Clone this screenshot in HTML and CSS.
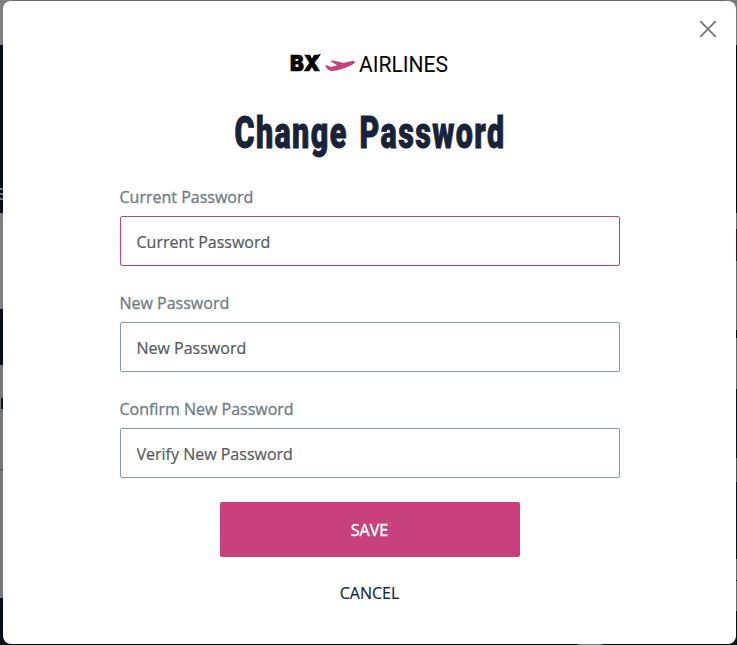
FILE: index.html
```
<!DOCTYPE html>
<html lang="en">
<head>
<meta charset="utf-8">
<title>Change Password</title>
<link rel="stylesheet" href="styles.css">
</head>
<body>
<div class="backdrop" aria-hidden="true">
  <div class="edge edge-left"></div>
  <div class="edge-middle"></div>
  <div class="edge edge-right"></div>
</div>
<main class="modal" role="dialog">
  <button class="close" aria-label="Close">
    <svg width="18" height="18" viewBox="0 0 18 18"><path d="M1.2 1.2 16.8 16.8M16.8 1.2 1.2 16.8" fill="none" stroke="#777" stroke-width="1.8"/></svg>
  </button>
  <svg class="logo" width="162" height="22" viewBox="0 0 162 22">
    <text class="logo-bx" x="1" y="18.3" textLength="30" lengthAdjust="spacingAndGlyphs">BX</text>
    <path d="M26.5 6 29 2.2Q30 1 32 .8L28 7Z"/>
    <path fill="#c8417c" d="M36 12.7 38 12.3 42 14 48.2 12.2 41.2 7.9 44 7.4 54.5 10.1C59 8.8 63 7.6 65.2 8.2C66.7 8.8 65.8 10.2 64 11.2C59.5 13.8 52 17 43.5 17.9C40.5 18.1 39 17 36 12.7Z"/>
    <text class="logo-name" x="70" y="18.6" textLength="89" lengthAdjust="spacingAndGlyphs">AIRLINES</text>
  </svg>
  <h1 class="title">
    <svg width="274" height="56" viewBox="0 0 274 56">
      <text x="1.5" y="40" textLength="271" lengthAdjust="spacingAndGlyphs">Change Password</text>
    </svg>
  </h1>
  <form class="form">
    <label class="field"><span class="label">Current Password</span><input class="input active" type="password" placeholder="Current Password"></label>
    <label class="field"><span class="label">New Password</span><input class="input" type="password" placeholder="New Password"></label>
    <label class="field"><span class="label">Confirm New Password</span><input class="input" type="password" placeholder="Verify New Password"></label>
    <button class="save" type="button">SAVE</button>
    <button class="cancel" type="button">CANCEL</button>
  </form>
</main>
</body>
</html>
```
FILE: styles.css
```
* { box-sizing: border-box; }
body {
  margin: 0;
  height: 645px;
  overflow: hidden;
  font-family: "Open Sans", "Noto Sans", sans-serif;
  font-size: 16px;
}
.backdrop {
  position: absolute;
  inset: 0;
  display: flex;
}
.edge { width: 12px; }
.edge-middle {
  flex: 1;
  background: linear-gradient(90deg, #070814 566px, #777 566px 590px, #070814 590px) 0 100% / 100% 40px no-repeat, #686868;
}
.edge-left {
  background:
    linear-gradient(#101722, #101722) 1px 398px / 11px 11px no-repeat,
    linear-gradient(#808080 45px, #080d1b 45px 188px, #777 188px 190px, #080d1b 190px 193px, #777 193px 195px, #080d1b 195px 198px, #777 198px 200px, #080d1b 200px 213px, #808080 213px 309px, #080d1b 309px 365px, #777 365px 469px, #555 469px 470px, #777 470px 598px, #080d1b 598px);
}
.edge-right {
  background: linear-gradient(#777 45px, #000 45px 213px, #686868 213px 229px, #3c0a24 229px 261px, #686868 261px 330px, #000 330px 338px, #686868 338px 389px, #06101c 389px 458px, #44515b 458px 482px, #06101c 482px 559px, #686868 559px 580px, #111 580px 581px, #686868 581px 611px, #070810 611px);
}
.modal {
  position: relative;
  display: flex;
  flex-direction: column;
  align-items: center;
  width: 733px;
  height: 643px;
  margin: 1px 1px 1px 3px;
  padding-top: 52px;
  border-radius: 8px;
  background: #fff;
}
.close {
  position: absolute;
  top: 19px;
  right: 19px;
  padding: 0;
  border: 0;
  background: none;
}
.close svg, .logo, .title svg { display: block; overflow: visible; }
.logo { flex: none; }
.logo-bx { font: 900 22px Inter, sans-serif; fill: #000; stroke: #000; stroke-width: .7px; }
.logo-name { font: 400 21.5px Roboto, sans-serif; fill: #000; }
.title { margin: 33px 0 0; }
.title text {
  font: 900 44px Roboto, sans-serif;
  letter-spacing: 2px;
  word-spacing: 4px;
  fill: #182238;
  stroke: #182238;
  stroke-width: .9px;
}
.form {
  display: flex;
  flex-direction: column;
  align-items: center;
  width: 500px;
  margin-top: 21px;
}
.field { display: block; width: 100%; height: 106px; }
.label {
  display: block;
  height: 31px;
  line-height: 24px;
  color: #6e7b86;
  -webkit-text-stroke: .3px #6e7b86;
}
.input {
  display: block;
  width: 100%;
  height: 50px;
  padding: 2px 16px 0;
  border: 1px solid #8b99a5;
  border-radius: 2px;
  font: inherit;
  outline: none;
}
.input.active { border-color: #c8417c; }
.input::placeholder { color: #55595c; opacity: 1; -webkit-text-stroke: .2px #55595c; }
.save {
  width: 300px;
  height: 55px;
  margin-top: -1px;
  border: 0;
  border-radius: 2px;
  background: #c8417c;
  color: #fff;
  font: 400 16px "Open Sans", sans-serif;
  -webkit-text-stroke: .4px #fff;
}
.cancel {
  margin-top: 24px;
  padding: 0;
  border: 0;
  background: none;
  color: #102a43;
  font: 400 16px/24px "Open Sans", sans-serif;
  -webkit-text-stroke: .2px #102a43;
}
```
